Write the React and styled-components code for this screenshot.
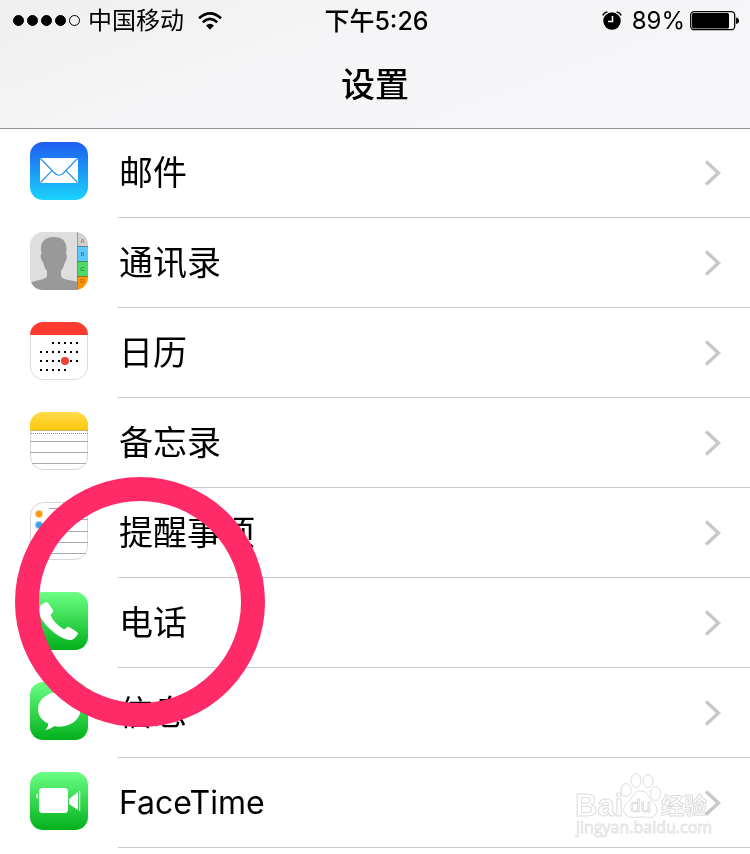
import React from "react";
import styled, { createGlobalStyle } from "styled-components";

const MailIcon = () => (
	<svg viewBox="0 0 58 58" aria-hidden="true">
		<defs>
			<linearGradient id="mail" x1="0" y1="0" x2="0" y2="1">
				<stop offset="0" stopColor="#1e5cf0" />
				<stop offset="1" stopColor="#1ad3fd" />
			</linearGradient>
		</defs>
		<rect width="58" height="58" rx="13" fill="url(#mail)" />
		<rect x="10" y="16" width="38" height="25" rx="1.5" fill="#fff" />
		<g fill="none" stroke="#2f8fe8" strokeWidth="1.2">
			<path d="M10.5 16.5 L24 30.5 Q29 36 34 30.5 L47.5 16.5" />
			<path d="M10.5 40.5 L22 28.7 M47.5 40.5 L36 28.7" />
		</g>
	</svg>
);

const ContactsIcon = () => (
	<svg viewBox="0 0 58 58" aria-hidden="true">
		<defs>
			<clipPath id="contactsClip">
				<rect width="58" height="58" rx="13" />
			</clipPath>
		</defs>
		<g clipPath="url(#contactsClip)">
			<rect width="58" height="58" fill="#dedede" />
			<path
				d="M24 5 C15 5 10.500 10 11 17 L11.500 22 C10 22 10.500 28 13 30 C14 34 15 37 17 39 L17 44 C16 48 5 48 0 51 L0 58 L47 58 L47 50 C42 48 32 48 31 44 L31 39 C33 37 34 33 35 30 C37 28 37.500 22 36 22 L36.500 17 C36.500 9 32 5 24 5 Z"
				fill="#999"
			/>
			<rect x="47" width="11" height="14" fill="#d2cfcd" />
			<rect x="47" y="14" width="11" height="15" fill="#5ac8fa" />
			<rect x="47" y="29" width="11" height="15" fill="#4cd964" />
			<rect x="47" y="44" width="11" height="14" fill="#ff9500" />
			<path
				d="M47 14.500 H58 M47 29.500 H58 M47 44.500 H58"
				stroke="#555"
				strokeOpacity="0.6"
			/>
			<path d="M47.500 0 V58" stroke="#777" strokeOpacity="0.6" />
			<g
				fill="#333"
				fillOpacity="0.65"
				fontFamily="Liberation Sans, sans-serif"
				fontSize="6"
				textAnchor="middle"
			>
				<text x="52.500" y="11">A</text>
				<text x="52.500" y="24">B</text>
				<text x="52.500" y="39">C</text>
				<text x="52.500" y="51">D</text>
			</g>
		</g>
	</svg>
);

const calendarDots = [
	[12, [2, 3, 4, 5, 6]],
	[21, [0, 1, 2, 3, 4, 5, 6]],
	[30, [0, 1, 2, 3, 5, 6]],
	[39, [0, 1, 2, 3, 4]],
];

const CalendarIcon = () => (
	<svg viewBox="0 0 58 58" aria-hidden="true">
		<rect x="0.5" y="0.5" width="57" height="57" rx="13" fill="#fff" stroke="#dcdcdc" />
		<path d="M0 13 A13 13 0 0 1 13 0 H45 A13 13 0 0 1 58 13 Z" fill="#ff3b30" />
		{calendarDots.map(([y, cols]) =>
			cols.map((col) => (
				<rect key={`${y}-${col}`} x={10 + col * 6} y={y + 8} width="2" height="2" />
			))
		)}
		<circle cx="35" cy="39" r="4" fill="#ee4136" />
	</svg>
);

const NotesIcon = () => (
	<svg viewBox="0 0 58 58" aria-hidden="true">
		<defs>
			<linearGradient id="notes" x1="0" y1="0" x2="0" y2="1">
				<stop offset="0" stopColor="#ffdb4b" />
				<stop offset="1" stopColor="#fdc80c" />
			</linearGradient>
		</defs>
		<rect x="0.5" y="0.5" width="57" height="57" rx="13" fill="#fff" stroke="#d5d5d5" />
		<path d="M0 18 V13 A13 13 0 0 1 13 0 H45 A13 13 0 0 1 58 13 V18 Z" fill="url(#notes)" />
		<path d="M0 18.500 H58" stroke="#c9b268" />
		<path d="M1 21.500 H58" stroke="#888" strokeDasharray="1 1" />
		<path d="M0 29.500 H58 M0 40.500 H58 M2 51.500 H56" stroke="#aaa" />
	</svg>
);

const RemindersIcon = () => (
	<svg viewBox="0 0 58 58" aria-hidden="true">
		<rect x="0.5" y="0.5" width="57" height="57" rx="13" fill="#fff" stroke="#d5d5d5" />
		<path
			d="M19 6.500 H52 M19 17.500 H58 M19 29.500 H58 M19 40.500 H58 M19 51.500 H56"
			stroke="#aaa"
		/>
		{["#f7980f", "#32a6e8", "#ffcc00", "#4cd964"].map((color, i) => (
			<g key={color}>
				<circle cx="9" cy={12 + i * 11} r="4" fill={color} fillOpacity="0.5" />
				<circle cx="9" cy={12 + i * 11} r="3" fill={color} />
			</g>
		))}
	</svg>
);

const GreenTile = ({ id, children }) => (
	<svg viewBox="0 0 58 58" aria-hidden="true">
		<defs>
			<linearGradient id={id} x1="0" y1="0" x2="0" y2="1">
				<stop offset="0" stopColor="#6bff83" />
				<stop offset="1" stopColor="#02b01b" />
			</linearGradient>
		</defs>
		<rect width="58" height="58" rx="13" fill={`url(#${id})`} />
		{children}
	</svg>
);

const PhoneIcon = () => (
	<GreenTile id="phone">
		<path
			d="M11 13 L16 10 Q17 10 18 11 L23 18 Q23.500 19 22.500 20.500 L20.500 23 Q23 29 29 34 L34 37.500 L37.500 35 Q38.500 34.500 40 35.500 L47 40 Q48.500 41 47.500 42.500 Q44 48 40 48 Q34 48 24.500 41 Q14 32.500 10 24 Q7 17 11 13 Z"
			fill="#fff"
		/>
	</GreenTile>
);

const MessagesIcon = () => (
	<GreenTile id="messages">
		<path
			d="M29 10 C17.500 10 8 17.500 8 27.500 C8 33.500 12 38.500 18 41.500 Q18.500 45 15 48 Q21 47 24.500 44 Q27 44.700 29 44.700 C41 44.700 50.500 37 50.500 27.500 C50.500 17.500 41 10 29 10 Z"
			fill="#fff"
		/>
	</GreenTile>
);

const FaceTimeIcon = () => (
	<GreenTile id="facetime">
		<g fill="#fff">
			<rect x="9" y="16" width="29" height="25" rx="3.500" />
			<path d="M39 27 L48 20 V38 L39 32 Z" />
			<rect x="49" y="19" width="1.200" height="20" />
			<path d="M8 21 V27 L6 24.500 V23.500 Z" />
		</g>
	</GreenTile>
);

const WifiIcon = () => (
	<svg width="24" height="18" viewBox="0 0 24 18" aria-hidden="true">
		<g fill="none" stroke="#000" strokeWidth="2.600">
			<path d="M1 6.300 Q12 -3.500 23 6.300" />
			<path d="M4.800 10.200 Q12 3.700 19.200 10.200" />
		</g>
		<path d="M8 13.500 Q12 10.200 16 13.500 L12 17.800 Z" />
	</svg>
);

const AlarmIcon = () => (
	<svg width="20" height="19" viewBox="0 0 20 19" aria-hidden="true">
		<circle cx="10" cy="10" r="8.700" />
		<g fill="none" stroke="#000" strokeWidth="1.400">
			<path d="M0.800 4.500 Q2 1.500 5.500 0.900" />
			<path d="M19.200 4.500 Q18 1.500 14.500 0.900" />
		</g>
		<path d="M10.500 5 V10.500 H6" fill="none" stroke="#fff" strokeWidth="1.500" />
	</svg>
);

const BatteryIcon = () => (
	<svg width="50" height="20" viewBox="0 0 50 20" aria-hidden="true">
		<rect x="0.7" y="0.7" width="44" height="18" rx="3.500" fill="none" stroke="#000" strokeWidth="1.300" />
		<rect x="2" y="2" width="37" height="15.400" rx="1.500" />
		<path d="M46 6.500 Q49 7 49 9.800 Q49 12.500 46 13 Z" />
	</svg>
);

const Chevron = () => (
	<svg width="18" height="28" viewBox="0 0 18 28" aria-hidden="true">
		<path d="M3 2.500 L15.500 14 L3 25.500" fill="none" stroke="#c7c7cc" strokeWidth="3.500" />
	</svg>
);

const WatermarkLogo = () => (
	<svg width="140" height="74" viewBox="0 0 140 74" role="img" aria-label="Baidu">
		<g fill="#fff" stroke="#dcdcdc">
			<text x="0" y="44" fontFamily="Liberation Sans, sans-serif" fontWeight="700" fontSize="31">
				Bai
			</text>
			<path d="M66 19 C59 19 58 25 54 29 C49 33 47 38 50 42 C54 47 60 45 66 45 C72 45 78 47 81 42 C84 37 81 33 77 29 C73 25 73 19 66 19 Z" />
			<ellipse cx="51" cy="18" rx="5" ry="6.500" />
			<ellipse cx="61" cy="8.500" rx="5" ry="7" />
			<ellipse cx="73" cy="9" rx="5" ry="6.500" />
			<ellipse cx="80.500" cy="21.500" rx="5" ry="7" />
			<text x="55" y="40" fontFamily="Liberation Sans, sans-serif" fontWeight="400" fontSize="19">
				du
			</text>
			<text x="86" y="42" fontFamily="Noto Sans CJK SC, sans-serif" fontWeight="700" fontSize="23">
				经验
			</text>
			<text
				x="1"
				y="61"
				fontFamily="Open Sans, sans-serif"
				fontWeight="400"
				fontSize="16"
				stroke="#e4e4e4"
			>
				jingyan.baidu.com
			</text>
		</g>
	</svg>
);

const settings = [
	{ label: "邮件", Icon: MailIcon },
	{ label: "通讯录", Icon: ContactsIcon },
	{ label: "日历", Icon: CalendarIcon },
	{ label: "备忘录", Icon: NotesIcon },
	{ label: "提醒事项", Icon: RemindersIcon },
	{ label: "电话", Icon: PhoneIcon },
	{ label: "信息", Icon: MessagesIcon },
	{ label: "FaceTime", Icon: FaceTimeIcon, latin: true },
];

const App = () => {
	return (
		<>
			<GlobalStyle />
			<Screen>
				<Header>
					<StatusBar>
						<StatusGroup>
							<Signal>
								{[1, 2, 3, 4, 5].map((bar) => (
									<SignalDot key={bar} $filled={bar < 5} />
								))}
							</Signal>
							<Carrier>中国移动</Carrier>
							<WifiIcon />
						</StatusGroup>
						<Time>下午5:26</Time>
						<StatusGroup $end>
							<AlarmIcon />
							<Percent>89%</Percent>
							<BatteryIcon />
						</StatusGroup>
					</StatusBar>
					<Title>设置</Title>
				</Header>
				<ListArea>
					<List>
						{settings.map(({ label, Icon, latin }) => (
							<li key={label}>
								<RowLink href="#">
									<IconBox>
										<Icon />
									</IconBox>
									<RowBody>
										<Label $latin={latin}>{label}</Label>
										<Chevron />
									</RowBody>
								</RowLink>
							</li>
						))}
					</List>
					<Ring />
					<Watermark>
						<WatermarkLogo />
					</Watermark>
				</ListArea>
			</Screen>
		</>
	);
};

const GlobalStyle = createGlobalStyle`
	* {
		box-sizing: border-box;
	}
	body {
		margin: 0;
		background: #fff;
		color: #000;
		font-family: Inter, "Noto Sans CJK SC", sans-serif;
	}
	svg {
		display: block;
		flex-shrink: 0;
	}
`;

const Screen = styled.div`
	min-height: 100vh;
	background: #fff;
`;

const Header = styled.header`
	position: relative;
	z-index: 1;
	height: 128px;
	background: linear-gradient(160deg, #f0efee 0%, #f5f5f7 40%, #f7f7f9 100%);
	box-shadow: 0 1px 0 #8f8f92;
`;

const StatusBar = styled.div`
	display: grid;
	grid-template-columns: 1fr auto 1fr;
	align-items: center;
	height: 41px;
	padding: 0 10px 0 13px;
	font-size: 24px;
	line-height: 40px;
`;

const StatusGroup = styled.div`
	display: flex;
	align-items: center;
	justify-content: ${({ $end }) => ($end ? "flex-end" : "flex-start")};
`;

const Signal = styled.div`
	display: flex;
	gap: 3px;
	margin-right: 8px;
`;

const SignalDot = styled.span`
	width: 11px;
	height: 11px;
	border: 1px solid #000;
	border-radius: 50%;
	background: ${({ $filled }) => ($filled ? "#000" : "transparent")};
`;

const Carrier = styled.span`
	margin-right: 14px;
`;

const Time = styled.span`
	font-size: 25px;
	font-weight: 500;
`;

const Percent = styled.span`
	margin: 0 5px 0 10px;
`;

const Title = styled.h1`
	margin: 0;
	font-size: 34px;
	font-weight: 500;
	line-height: 87px;
	text-align: center;
`;

const ListArea = styled.main`
	position: relative;
`;

const List = styled.ul`
	margin: 0;
	padding: 0;
	list-style: none;
`;

const RowLink = styled.a`
	display: flex;
	align-items: center;
	gap: 30px;
	padding-left: 30px;
	color: inherit;
	text-decoration: none;
`;

const IconBox = styled.span`
	flex: none;
	width: 58px;
	height: 58px;
	margin-bottom: 4px;
`;

const RowBody = styled.span`
	display: flex;
	flex: 1;
	align-items: center;
	justify-content: space-between;
	height: 90px;
	padding-right: 29px;
	border-bottom: 1px solid #c8c7cc;
`;

const Label = styled.span`
	padding-left: 1px;
	font-size: ${({ $latin }) => ($latin ? "32px" : "34px")};
	line-height: 88px;
`;

const Ring = styled.div`
	position: absolute;
	top: 349px;
	left: 15px;
	width: 250px;
	height: 250px;
	border: 24px solid #ff2a68;
	border-radius: 50%;
	pointer-events: none;
`;

const Watermark = styled.div`
	position: absolute;
	right: 35px;
	bottom: 2px;
	mix-blend-mode: multiply;
	pointer-events: none;
`;

export default App;
